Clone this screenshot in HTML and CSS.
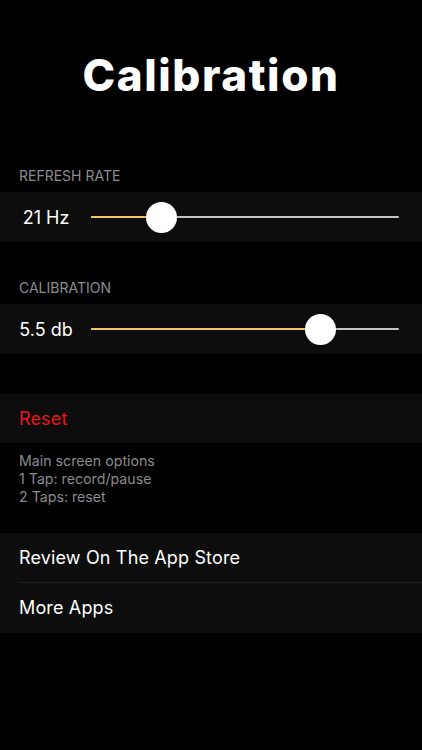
FILE: index.html
```html
<!DOCTYPE html>
<html>
<head>
<meta charset="utf-8">
<link rel="stylesheet" href="styles.css">
</head>
<body>
<div class="screen">
  <h1 class="title">Calibration</h1>

  <div class="section-label">REFRESH RATE</div>
  <div class="row slider-row">
    <span class="value">21 Hz</span>
    <div class="slider">
      <div class="track"></div>
      <div class="fill" style="width: 70px"></div>
      <div class="thumb" style="left: 55px"></div>
    </div>
  </div>

  <div class="section-label">CALIBRATION</div>
  <div class="row slider-row">
    <span class="value">5.5 db</span>
    <div class="slider">
      <div class="track"></div>
      <div class="fill" style="width: 230px"></div>
      <div class="thumb" style="left: 214px"></div>
    </div>
  </div>

  <div class="group reset-group">
    <div class="row cell reset">Reset</div>
  </div>
  <div class="footer">
    <div>Main screen options</div>
    <div>1 Tap: record/pause</div>
    <div>2 Taps: reset</div>
  </div>

  <div class="group links">
    <div class="row cell">Review On The App Store</div>
    <div class="row cell">More Apps</div>
  </div>
</div>
</body>
</html>
```
FILE: styles.css
```css
* { box-sizing: border-box; }
html, body {
  margin: 0;
  padding: 0;
  background: #000;
}
body {
  font-family: Inter, "Noto Sans", "Liberation Sans", sans-serif;
  color: #fff;
  width: 422px;
  height: 750px;
  overflow: hidden;
}
.screen {
  display: flex;
  flex-direction: column;
}
.title {
  margin: 0;
  padding-top: 47px;
  height: 160px;
  text-align: center;
  font-size: 44px;
  font-weight: 800;
  line-height: 56px;
  letter-spacing: 1.6px;
}
.section-label {
  font-size: 14px;
  color: #8c8c91;
  padding-left: 19px;
  height: 32px;
  line-height: 32px;
}
.row {
  background: #0d0d0d;
  height: 50px;
  display: flex;
  align-items: center;
}
.slider-row {
  padding-left: 19px;
  padding-right: 23px;
  margin-bottom: 30px;
}
.value {
  width: 54px;
  text-align: center;
  font-size: 18px;
  flex: none;
}
.slider {
  position: relative;
  flex: 1;
  height: 50px;
  margin-left: 18px;
}
.track {
  position: absolute;
  left: 0;
  right: 0;
  top: 24px;
  height: 2px;
  border-radius: 1px;
  background: #c4c4c6;
}
.fill {
  position: absolute;
  left: 0;
  top: 24px;
  height: 2px;
  border-radius: 1px;
  background: #f3c66b;
}
.thumb {
  position: absolute;
  top: 10px;
  width: 31px;
  height: 31px;
  border-radius: 50%;
  background: #fff;
  box-shadow: 0 1px 3px rgba(0,0,0,0.3);
}
.reset-group {
  margin-top: 10px;
}
.cell {
  padding-left: 19px;
  font-size: 18px;
  letter-spacing: 0.15px;
}
.reset {
  color: #e8141b;
  height: 49px;
}
.footer {
  padding: 9px 19px 0;
  height: 90px;
  font-size: 14.2px;
  line-height: 18px;
  color: #8a8a8f;
}
.links .cell:first-child {
  height: 49px;
}
.links .cell + .cell {
  height: 51px;
  background: linear-gradient(#1e1e20, #1e1e20) 18px 0 / calc(100% - 18px) 1px no-repeat, #0d0d0d;
}
```
